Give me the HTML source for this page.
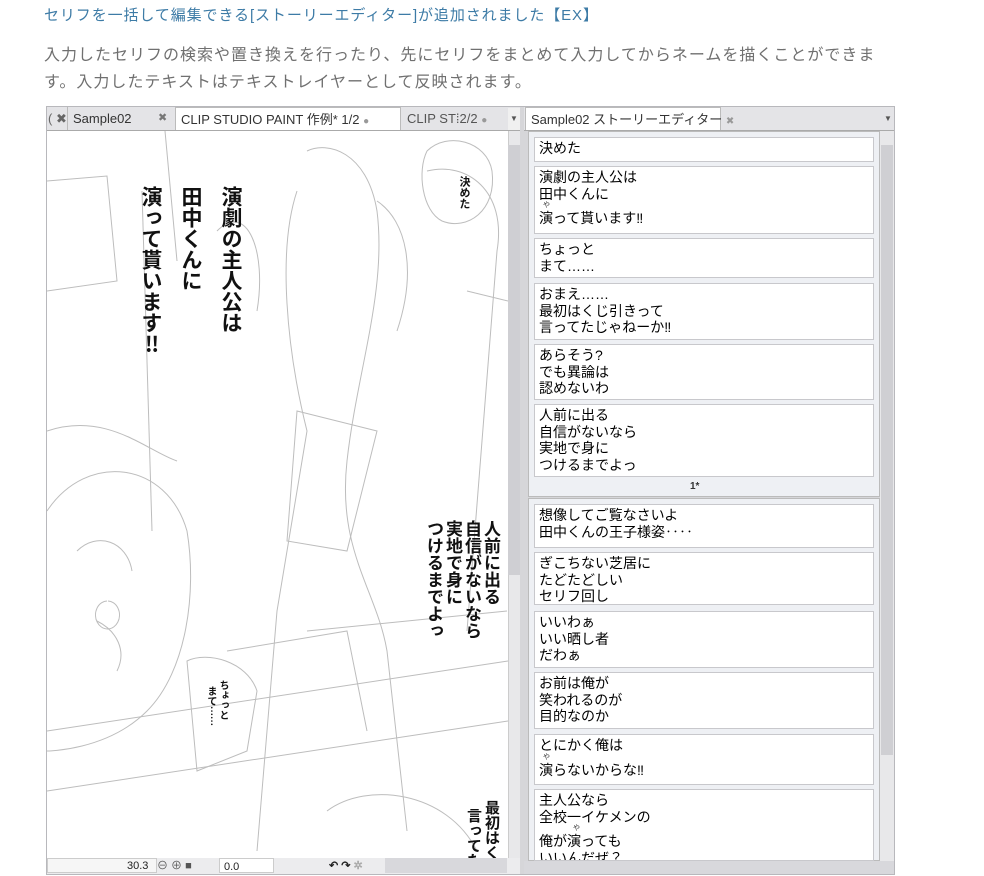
<!DOCTYPE html>
<html><head><meta charset="utf-8"><style>
*{margin:0;padding:0;box-sizing:border-box}
body{width:984px;height:876px;background:#fff;font-family:"Liberation Sans","Noto Sans CJK JP",sans-serif;position:relative;overflow:hidden}
.t{position:absolute;left:44px;top:4px;font-size:15px;letter-spacing:0.9px;color:#3d7ba6;white-space:nowrap}
.p{position:absolute;left:44px;top:42px;font-size:16px;letter-spacing:1px;color:#707070;line-height:27px;width:850px}
.frame{position:absolute;left:46px;top:106px;width:849px;height:769px;background:#d6d6d9;border:1px solid #b8b8bc}
.abs{position:absolute}
.tab{position:absolute;top:0;height:23px;font-size:13px;line-height:23px;color:#333;padding-left:5px;white-space:nowrap}
.v{position:absolute;writing-mode:vertical-rl;font-weight:bold;color:#111;font-family:"Noto Sans CJK JP",sans-serif;white-space:nowrap}
.box{position:absolute;left:534px;width:340px;background:#fff;border:1px solid #c8c8cc;font-size:14px;line-height:16.5px;padding:2px 4px;color:#000;overflow:hidden;font-family:"Liberation Sans","Noto Sans CJK JP",sans-serif}
.fu{font-size:7px;line-height:8px;padding-left:4px;color:#333}
</style></head><body>
<div class="t">セリフを一括して編集できる[ストーリーエディター]が追加されました【EX】</div>
<div class="p">入力したセリフの検索や置き換えを行ったり、先にセリフをまとめて入力してからネームを描くことができます。入力したテキストはテキストレイヤーとして反映されます。</div>
<div class="frame"></div>
<!-- left tabs -->
<div class="abs" style="left:47px;top:107px;width:473px;height:24px;background:#e4e4e7;border-bottom:1px solid #aaa"></div>
<div class="tab" style="left:43px;top:107px;color:#666">( ✖</div>
<div class="tab" style="left:67px;top:107px;width:108px;border-left:1px solid #bbb">Sample02<span style="position:absolute;left:90px;color:#777;font-size:11px">✖</span></div>
<div class="tab" style="left:175px;top:107px;width:226px;background:#fff;border:1px solid #bbb;border-bottom:none">CLIP STUDIO PAINT 作例* 1/2 <span style="color:#999;font-size:10px">●</span></div>
<div class="tab" style="left:402px;top:107px;color:#555">CLIP ST⁞2/2 <span style="color:#999;font-size:10px">●</span></div>
<div class="abs" style="left:508px;top:108px;width:12px;height:22px;background:#f0f0f0;font-size:8px;color:#555;text-align:center;line-height:22px">▼</div>
<!-- canvas -->
<div class="abs" style="left:47px;top:131px;width:461px;height:727px;background:#fff;overflow:hidden">
<svg width="461" height="727" style="position:absolute;left:0;top:0" fill="none" stroke="#bdbdbd" stroke-width="1">
<path d="M0 50 L60 45 L70 150 L0 160"/><path d="M118 0 L130 130"/><path d="M95 60 L105 400"/><path d="M260 20 C280 10 320 20 330 80 C340 160 310 240 300 330 C290 420 330 460 340 520 L360 700"/><path d="M250 60 C230 120 240 220 260 300 L230 480 L210 720"/><path d="M380 40 C420 30 460 60 450 120 L420 500"/><path d="M0 300 C60 280 100 320 130 330"/><path d="M0 380 C40 320 120 330 140 400 C150 460 140 540 100 580 C60 620 0 620 0 620"/><path d="M30 420 C50 400 80 410 85 440"/><path d="M60 470 a12 14 0 1 0 1 0"/><path d="M0 600 L461 530"/><path d="M0 660 L461 590"/><path d="M260 500 L460 480"/><path d="M180 520 L300 500 L320 600"/><path d="M170 100 C200 70 220 120 210 180"/><path d="M380 20 C400 0 440 10 445 40 C450 80 420 100 395 90 C375 80 370 40 380 20"/><path d="M140 530 C160 520 200 530 210 560 L200 620 L150 640 Z"/><path d="M330 70 C360 90 370 140 350 200"/><path d="M250 280 L330 300 L300 420 L240 410 Z"/><path d="M420 160 L461 170"/><path d="M280 680 C320 650 400 660 430 720"/><path d="M50 490 C70 500 80 520 70 540"/></svg>
</div>
<div class="v" style="left:220px;top:186px;font-size:21px;line-height:24px">演劇の主人公は</div>
<div class="v" style="left:180px;top:186px;font-size:21px;line-height:24px">田中くんに</div>
<div class="v" style="left:140px;top:186px;font-size:21px;line-height:24px">演って貰います‼</div>
<div class="v" style="left:459px;top:176px;font-size:11px;line-height:12px">決めた</div>
<div class="v" style="left:482px;top:520px;font-size:17px;line-height:20px">人前に出る</div>
<div class="v" style="left:463px;top:520px;font-size:17px;line-height:20px">自信がないなら</div>
<div class="v" style="left:444px;top:520px;font-size:17px;line-height:20px">実地で身に</div>
<div class="v" style="left:425px;top:520px;font-size:17px;line-height:20px">つけるまでよっ</div>
<div class="v" style="left:218px;top:680px;font-size:10px;line-height:12px">ちょっと</div>
<div class="v" style="left:206px;top:686px;font-size:10px;line-height:12px">まて……</div>
<div class="v" style="left:483px;top:800px;font-size:15px;line-height:18px">最初はく</div>
<div class="v" style="left:465px;top:808px;font-size:15px;line-height:18px">言ってた</div>
<!-- left vscroll -->
<div class="abs" style="left:508px;top:131px;width:12px;height:727px;background:#e8e8ea;border-left:1px solid #ccc"></div>
<div class="abs" style="left:508px;top:145px;width:12px;height:430px;background:#cfcfd3"></div>
<!-- bottom bar -->
<div class="abs" style="left:47px;top:858px;width:473px;height:16px;background:#ececee;font-size:11px;line-height:16px;color:#222">
<span class="abs" style="left:0;width:110px;height:15px;background:#f6f6f6;border:1px solid #ccc"></span>
<span class="abs" style="left:80px">30.3</span>
<span class="abs" style="left:110px;color:#555">⊖ ⊕ ■</span>
<span class="abs" style="left:172px;width:55px;height:15px;background:#fff;border:1px solid #ccc;padding-left:4px">0.0</span>
<span class="abs" style="left:282px;font-weight:bold">↶ ↷ <span style="color:#aaa">✲</span></span>
<span class="abs" style="left:338px;width:122px;height:15px;background:#d8d8dc"></span>
</div>
<!-- right panel -->
<div class="abs" style="left:524px;top:107px;width:370px;height:24px;background:#e4e4e7;border-bottom:1px solid #aaa"></div>
<div class="tab" style="left:525px;top:107px;width:196px;background:#fff;border:1px solid #bbb;border-bottom:none">Sample02 ストーリーエディター <span style="color:#999;font-size:10px">✖</span></div>
<div class="abs" style="left:882px;top:108px;width:12px;height:22px;font-size:8px;color:#555;text-align:center;line-height:22px">▼</div>
<div class="abs" style="left:528px;top:131px;width:352px;height:366px;background:#eef0f4;border:1px solid #bbb"></div>
<div class="abs" style="left:528px;top:498px;width:352px;height:363px;background:#eef0f4;border:1px solid #bbb"></div>
<div class="abs" style="left:690px;top:481px;font-size:10px;font-weight:bold;color:#333">1*</div>
<div class="abs" style="left:880px;top:131px;width:14px;height:730px;background:#e8e8ea"></div>
<div class="abs" style="left:881px;top:145px;width:12px;height:610px;background:#cfcfd3"></div>
<div class="abs" style="left:524px;top:861px;width:370px;height:13px;background:#d8d8dc"></div>
<div class="box" style="top:137px;height:25px">決めた</div>
<div class="box" style="top:166px;height:68px">演劇の主人公は<br>田中くんに<div class="fu">や</div>演って貰います‼</div>
<div class="box" style="top:238px;height:40px">ちょっと<br>まて……</div>
<div class="box" style="top:283px;height:57px">おまえ……<br>最初はくじ引きって<br>言ってたじゃねーか‼</div>
<div class="box" style="top:344px;height:56px">あらそう?<br>でも異論は<br>認めないわ</div>
<div class="box" style="top:404px;height:73px">人前に出る<br>自信がないなら<br>実地で身に<br>つけるまでよっ</div>
<div class="box" style="top:504px;height:44px">想像してご覧なさいよ<br>田中くんの王子様姿‥‥</div>
<div class="box" style="top:552px;height:53px">ぎこちない芝居に<br>たどたどしい<br>セリフ回し</div>
<div class="box" style="top:611px;height:57px">いいわぁ<br>いい晒し者<br>だわぁ</div>
<div class="box" style="top:672px;height:57px">お前は俺が<br>笑われるのが<br>目的なのか</div>
<div class="box" style="top:734px;height:51px">とにかく俺は<div class="fu">や</div>演らないからな‼</div>
<div class="box" style="top:789px;height:72px">主人公なら<br>全校一イケメンの<div class="fu" style="padding-left:34px">や</div>俺が演っても<br>いいんだぜ？</div>
</body></html>
